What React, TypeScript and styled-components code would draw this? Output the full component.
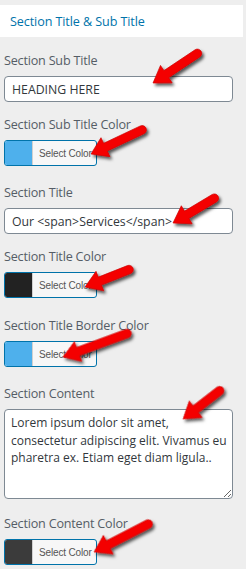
import React from "react";
import styled, { createGlobalStyle } from "styled-components";

const Global = createGlobalStyle`
  html, body { margin: 0; padding: 0; background: #eeeeee; }
  body { font-family: "Open Sans", "Noto Sans", sans-serif; width: 246px; height: 569px; overflow: hidden; }
  #root { position: relative; }
`;

const Page = styled.div`
  position: relative;
  width: 246px;
  min-height: 569px;
  padding-top: 5px;
  box-sizing: border-box;
`;

const Header = styled.div`
  width: 243px;
  height: 32px;
  background: #ffffff;
  display: flex;
  align-items: center;
  padding-left: 10px;
  box-sizing: border-box;
  color: #0073aa;
  font-size: 12.6px;
  letter-spacing: -0.1px;
  font-weight: 400;
`;

const Body = styled.div`
  padding: 16px 13px 0 4px;
  display: flex;
  flex-direction: column;
`;

const Control = styled.div<{ $gap: number }>`
  display: flex;
  flex-direction: column;
  margin-bottom: ${(p) => p.$gap}px;
`;

const Label = styled.div`
  font-size: 12.6px;
  font-weight: 500;
  letter-spacing: -0.2px;
  line-height: 16px;
  color: #555d66;
  margin-bottom: 7px;
`;

const TextInput = styled.input`
  box-sizing: border-box;
  width: 229px;
  height: 26px;
  border: 1px solid #7e8993;
  border-radius: 4px;
  background: #fff;
  padding: 0 7px;
  margin: 0;
  font-family: inherit;
  font-size: 12.3px;
  color: #32373c;
  outline: none;
`;

const TextArea = styled.textarea`
  box-sizing: border-box;
  width: 229px;
  height: 90px;
  border: 1px solid #7e8993;
  border-radius: 4px;
  background: #fff;
  padding: 4px 3px 4px 6px;
  font-family: inherit;
  font-size: 12px;
  line-height: 17.5px;
  color: #32373c;
  outline: none;
  resize: vertical;
  margin: 0;
  display: block;
`;

const ColorButton = styled.button`
  box-sizing: border-box;
  width: 93px;
  height: 26px;
  border: 1px solid #0073aa;
  border-radius: 3px;
  padding: 0;
  margin: 0;
  display: flex;
  overflow: hidden;
  background: #f7f7f7;
  cursor: pointer;
`;

const Swatch = styled.span<{ $color: string }>`
  width: 27px;
  height: 100%;
  background: ${(p) => p.$color};
  border-right: 1px solid #d0d0d0;
  flex: none;
`;

const ColorText = styled.span`
  flex: 1;
  display: flex;
  align-items: center;
  padding-left: 6px;
  font-family: inherit;
  font-size: 10px;
  letter-spacing: -0.15px;
  color: #555;
  white-space: nowrap;
`;

const Overlay = styled.svg`
  position: absolute;
  left: 0;
  top: 0;
  width: 246px;
  height: 569px;
  pointer-events: none;
`;

type ArrowProps = { x1: number; y1: number; x2: number; y2: number };

const Arrow: React.FC<ArrowProps> = ({ x1, y1, x2, y2 }) => {
  const dx = x2 - x1;
  const dy = y2 - y1;
  const len = Math.sqrt(dx * dx + dy * dy);
  const ang = (Math.atan2(dy, dx) * 180) / Math.PI;
  const hw = 4.3;
  const L = len - hw;
  const hl = 16;
  const hh = 10.5;
  const d = `M0,${-hw} H${L - hl} V${-hh} L${L},0 L${L - hl},${hh} V${hw} H0 A${hw} ${hw} 0 0 1 0 ${-hw} Z`;
  const ux = dx / len;
  const uy = dy / len;
  const sx = x1 + ux * hw;
  const sy = y1 + uy * hw;
  return (
    <g transform={`translate(${sx} ${sy}) rotate(${ang})`}>
      <path d={d} fill="#f40000" stroke="#cc0000" strokeWidth={0.6} strokeLinejoin="round" />
    </g>
  );
};

type Ctl =
  | { kind: "text"; label: string; value: string; gap: number }
  | { kind: "color"; label: string; color: string; gap: number }
  | { kind: "area"; label: string; value: string; gap: number };

const controls: Ctl[] = [
  { kind: "text", label: "Section Sub Title", value: "HEADING HERE", gap: 15 },
  { kind: "color", label: "Section Sub Title Color", color: "#4eb0ec", gap: 19 },
  { kind: "text", label: "Section Title", value: "Our <span>Services</span>", gap: 15 },
  { kind: "color", label: "Section Title Color", color: "#222222", gap: 20 },
  { kind: "color", label: "Section Title Border Color", color: "#4eb0ec", gap: 19 },
  {
    kind: "area",
    label: "Section Content",
    value:
      "Lorem ipsum dolor sit amet, consectetur adipiscing elit. Vivamus eu pharetra ex. Etiam eget diam ligula..",
    gap: 17,
  },
  { kind: "color", label: "Section Content Color", color: "#3b3b3b", gap: 0 },
];

const arrows: ArrowProps[] = [
  { x1: 201, y1: 51, x2: 153, y2: 83 },
  { x1: 146, y1: 128, x2: 91, y2: 154 },
  { x1: 218, y1: 196, x2: 173, y2: 223 },
  { x1: 133, y1: 268, x2: 85, y2: 287 },
  { x1: 131, y1: 332, x2: 63, y2: 357 },
  { x1: 223, y1: 388, x2: 183, y2: 419 },
  { x1: 152, y1: 522, x2: 94, y2: 552 },
];

export default function App() {
  return (
    <Page>
      <Global />
      <Header>Section Title &amp; Sub Title</Header>
      <Body>
        {controls.map((c, i) => (
          <Control key={i} $gap={c.gap}>
            <Label>{c.label}</Label>
            {c.kind === "text" && <TextInput defaultValue={c.value} />}
            {c.kind === "area" && <TextArea defaultValue={c.value} />}
            {c.kind === "color" && (
              <ColorButton type="button">
                <Swatch $color={c.color} />
                <ColorText>Select Color</ColorText>
              </ColorButton>
            )}
          </Control>
        ))}
      </Body>
      <Overlay viewBox="0 0 246 569">
        <defs>
          <filter id="sh" x="-20%" y="-20%" width="160%" height="180%">
            <feDropShadow dx="2" dy="2.5" stdDeviation="1.4" floodColor="#000" floodOpacity="0.65" />
          </filter>
        </defs>
        <g filter="url(#sh)">
          {arrows.map((a, i) => (
            <Arrow key={i} {...a} />
          ))}
        </g>
      </Overlay>
    </Page>
  );
}
